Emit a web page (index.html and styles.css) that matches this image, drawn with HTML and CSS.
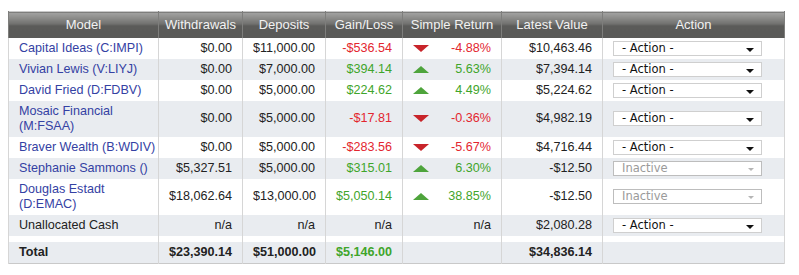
FILE: index.html
```html
<!DOCTYPE html>
<html>
<head>
<meta charset="utf-8">
<link rel="stylesheet" href="styles.css">
</head>
<body>
<table class="grid">
  <colgroup>
    <col class="c-model"><col class="c-wd"><col class="c-dep"><col class="c-gain"><col class="c-ret"><col class="c-val"><col class="c-act">
  </colgroup>
  <thead>
    <tr><th>Model</th><th>Withdrawals</th><th>Deposits</th><th>Gain/Loss</th><th>Simple Return</th><th>Latest Value</th><th>Action</th></tr>
  </thead>
  <tbody>
    <tr>
      <td class="name"><a class="link">Capital Ideas (C:IMPI)</a></td><td class="num">$0.00</td><td class="num">$11,000.00</td><td class="num neg">-$536.54</td>
      <td class="ret"><span class="tri down"></span><span class="neg">-4.88%</span></td><td class="num">$10,463.46</td>
      <td><div class="sel"><span>- Action -</span><i class="arr"></i></div></td>
    </tr>
    <tr class="alt">
      <td class="name"><a class="link">Vivian Lewis (V:LIYJ)</a></td><td class="num">$0.00</td><td class="num">$7,000.00</td><td class="num pos">$394.14</td>
      <td class="ret"><span class="tri up"></span><span class="pos">5.63%</span></td><td class="num">$7,394.14</td>
      <td><div class="sel"><span>- Action -</span><i class="arr"></i></div></td>
    </tr>
    <tr>
      <td class="name"><a class="link">David Fried (D:FDBV)</a></td><td class="num">$0.00</td><td class="num">$5,000.00</td><td class="num pos">$224.62</td>
      <td class="ret"><span class="tri up"></span><span class="pos">4.49%</span></td><td class="num">$5,224.62</td>
      <td><div class="sel"><span>- Action -</span><i class="arr"></i></div></td>
    </tr>
    <tr class="alt">
      <td class="name"><a class="link">Mosaic Financial<br>(M:FSAA)</a></td><td class="num">$0.00</td><td class="num">$5,000.00</td><td class="num neg">-$17.81</td>
      <td class="ret"><span class="tri down"></span><span class="neg">-0.36%</span></td><td class="num">$4,982.19</td>
      <td><div class="sel"><span>- Action -</span><i class="arr"></i></div></td>
    </tr>
    <tr>
      <td class="name"><a class="link">Braver Wealth (B:WDIV)</a></td><td class="num">$0.00</td><td class="num">$5,000.00</td><td class="num neg">-$283.56</td>
      <td class="ret"><span class="tri down"></span><span class="neg">-5.67%</span></td><td class="num">$4,716.44</td>
      <td><div class="sel"><span>- Action -</span><i class="arr"></i></div></td>
    </tr>
    <tr class="alt">
      <td class="name"><a class="link">Stephanie Sammons ()</a></td><td class="num">$5,327.51</td><td class="num">$5,000.00</td><td class="num pos">$315.01</td>
      <td class="ret"><span class="tri up"></span><span class="pos">6.30%</span></td><td class="num">-$12.50</td>
      <td><div class="sel off"><span>Inactive</span><i class="arr"></i></div></td>
    </tr>
    <tr>
      <td class="name"><a class="link">Douglas Estadt<br>(D:EMAC)</a></td><td class="num">$18,062.64</td><td class="num">$13,000.00</td><td class="num pos">$5,050.14</td>
      <td class="ret"><span class="tri up"></span><span class="pos">38.85%</span></td><td class="num">-$12.50</td>
      <td><div class="sel off"><span>Inactive</span><i class="arr"></i></div></td>
    </tr>
    <tr class="alt">
      <td class="name">Unallocated Cash</td><td class="num">n/a</td><td class="num">n/a</td><td class="num">n/a</td>
      <td class="num">n/a</td><td class="num">$2,080.28</td>
      <td><div class="sel"><span>- Action -</span><i class="arr"></i></div></td>
    </tr>
    <tr class="gap"><td></td><td></td><td></td><td></td><td></td><td></td><td></td></tr>
    <tr class="alt total">
      <td class="name">Total</td><td class="num">$23,390.14</td><td class="num">$51,000.00</td><td class="num pos">$5,146.00</td>
      <td></td><td class="num">$34,836.14</td><td></td>
    </tr>
  </tbody>
</table>
</body>
</html>
```
FILE: styles.css
```css
body {
  margin: 0;
  padding: 11px 0 0 8px;
  background: #fff;
  font-family: "Liberation Sans", Arial, sans-serif;
  font-size: 12.6px;
  color: #222;
}
.grid {
  border-collapse: collapse;
  table-layout: fixed;
  width: 776px;
  border: 1px solid #c9c9c9;
}
.c-model { width: 150px; }
.c-wd { width: 84px; }
.c-dep { width: 83px; }
.c-gain { width: 77px; }
.c-ret { width: 99px; }
.c-val { width: 101px; }
.c-act { width: 182px; }

.grid th {
  height: 26px;
  padding: 0;
  box-sizing: border-box;
  font-weight: normal;
  font-size: 13px;
  color: #f2f2f2;
  text-align: center;
  background: linear-gradient(to bottom, #a3a3a3 0px, #8a8a88 6px, #6f6f6d 12px, #5b5b59 13px, #5a5a58 26px);
  border-left: 1px solid #7e7e7c;
  border-right: 1px solid #7e7e7c;
}
.grid td {
  padding: 3px 10px 3px 10px;
  line-height: 15px;
  border-left: 1px solid #d6d6d6;
  border-right: 1px solid #d6d6d6;
  vertical-align: middle;
  background: #fff;
}
.grid td.name { white-space: nowrap; padding-right: 2px; }
.grid tr.alt td { background: #e9ecf0; }
.grid tr.gap td { padding: 0; height: 6px; line-height: 0; background: #fff; }
.grid tr.total td { font-weight: bold; }
.grid td.num { text-align: right; }
.link { color: #3441a3; text-decoration: none; }
.neg { color: #e3262f; }
.pos { color: #3fa52b; }

.ret { text-align: right; }
.ret .tri {
  float: left;
  width: 0;
  height: 0;
  margin-top: 4px;
  border-left: 8px solid transparent;
  border-right: 8px solid transparent;
}
.tri.down { border-top: 7px solid #c8242a; }
.tri.up { border-bottom: 7px solid #4ea43c; }

.sel {
  position: relative;
  width: 149px;
  height: 15px;
  box-sizing: border-box;
  border: 1px solid #cfcfcf;
  background: #fff;
  font-family: "DejaVu Sans", Verdana, sans-serif;
  font-size: 11.5px;
  line-height: 13px;
  color: #111;
  padding-left: 8px;
}
.sel .arr {
  position: absolute;
  right: 7px;
  top: 6px;
  width: 0;
  height: 0;
  border-left: 4px solid transparent;
  border-right: 4px solid transparent;
  border-top: 4px solid #111;
}
.sel.off { color: #9a9a9a; border-color: #bdbdbd; }
.sel.off .arr { border-top-color: #b5b5b5; border-left-width: 3px; border-right-width: 3px; border-top-width: 3px; }
```
